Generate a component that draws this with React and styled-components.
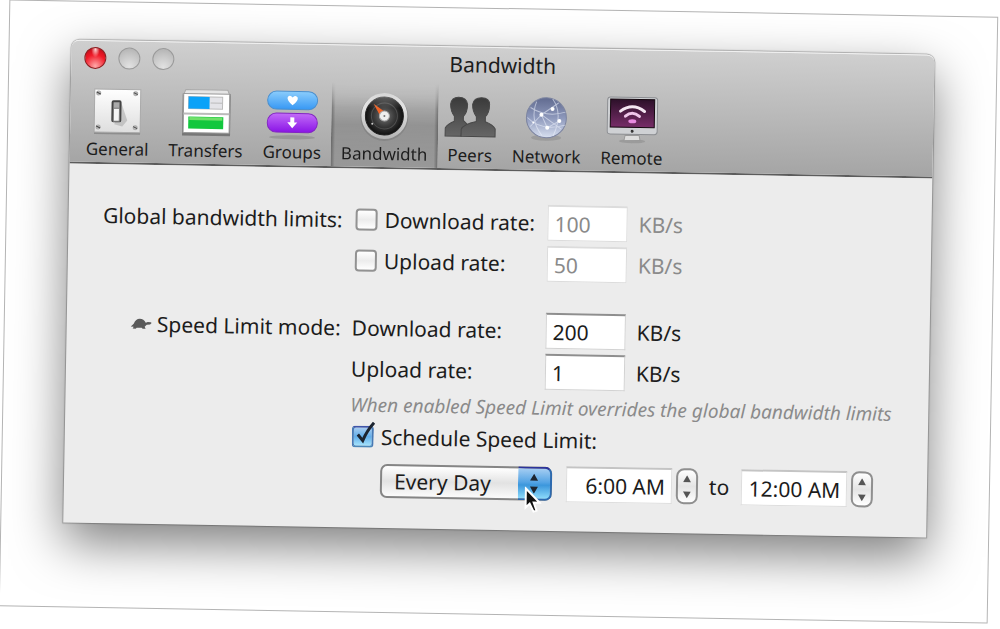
import React from "react";
import styled, { createGlobalStyle, css } from "styled-components";

const TOOLS = [
  { name: "General", icon: GeneralIcon },
  { name: "Transfers", icon: TransfersIcon },
  { name: "Groups", icon: GroupsIcon },
  { name: "Bandwidth", icon: BandwidthIcon, active: true },
  { name: "Peers", icon: PeersIcon },
  { name: "Network", icon: NetworkIcon },
  { name: "Remote", icon: RemoteIcon },
];

const App = () => {
  return (
    <Page>
      <GlobalStyle />
      <Sheet>
        <Window>
          <Header>
            <TitleBar>
              <Lights>
                <Light $red aria-label="Close" />
                <Light aria-label="Minimize" />
                <Light aria-label="Zoom" />
              </Lights>
              <Title>Bandwidth</Title>
            </TitleBar>
            <Toolbar>
              {TOOLS.map(({ name, icon: Icon, active }) => (
                <Tool key={name} $active={active}>
                  <Icon />
                  {name}
                </Tool>
              ))}
            </Toolbar>
          </Header>
          <Body>
            <Section>
              <SectionLabel>Global bandwidth limits:</SectionLabel>
              <Fields>
                <Row>
                  <Check id="limit-down" label="Download rate:" />
                  <RateInput aria-label="Download limit" defaultValue="100" disabled />
                  <Unit $muted>KB/s</Unit>
                </Row>
                <Row>
                  <Check id="limit-up" label="Upload rate:" />
                  <RateInput aria-label="Upload limit" defaultValue="50" disabled />
                  <Unit $muted>KB/s</Unit>
                </Row>
              </Fields>
            </Section>
            <Section>
              <SectionLabel>
                <Turtle />
                Speed Limit mode:
              </SectionLabel>
              <Fields>
                <Row>
                  <label htmlFor="speed-down">Download rate:</label>
                  <RateInput id="speed-down" defaultValue="200" />
                  <Unit>KB/s</Unit>
                </Row>
                <Row>
                  <label htmlFor="speed-up">Upload rate:</label>
                  <RateInput id="speed-up" defaultValue="1" />
                  <Unit>KB/s</Unit>
                </Row>
                <Hint>When enabled Speed Limit overrides the global bandwidth limits</Hint>
                <Check id="schedule" label="Schedule Speed Limit:" defaultChecked />
                <Schedule>
                  <Popup>
                    <Select aria-label="Days" defaultValue="Every Day">
                      <option>Every Day</option>
                      <option>Weekdays</option>
                      <option>Weekends</option>
                    </Select>
                    <PopupCap>
                      <svg width="10" height="20" viewBox="0 0 10 20">
                        <path d="M5 0L9 7H1zM5 20L1 13H9z" fill="#1d2530" />
                      </svg>
                    </PopupCap>
                    <Cursor />
                  </Popup>
                  <TimeInput aria-label="From" defaultValue="6:00 AM" />
                  <Steps />
                  <To>to</To>
                  <TimeInput aria-label="Until" defaultValue="12:00 AM" />
                  <Steps />
                </Schedule>
              </Fields>
            </Section>
          </Body>
        </Window>
      </Sheet>
    </Page>
  );
};

export default App;

function Check({ id, label, ...rest }) {
  return (
    <CheckWrap>
      <CheckBox>
        <CheckInput type="checkbox" id={id} {...rest} />
        <Tick viewBox="0 0 22 26">
          <path d="M5 13L10 19Q14 9 21 1" fill="none" stroke="#1c2430" strokeWidth="3" />
        </Tick>
      </CheckBox>
      <label htmlFor={id}>{label}</label>
    </CheckWrap>
  );
}

function Steps() {
  return (
    <Stepper>
      <StepButton aria-label="Later">
        <svg width="8" height="7" viewBox="0 0 8 7">
          <path d="M4 0L8 7H0z" fill="#555" />
        </svg>
      </StepButton>
      <StepButton aria-label="Earlier">
        <svg width="8" height="7" viewBox="0 0 8 7">
          <path d="M4 7L0 0H8z" fill="#555" />
        </svg>
      </StepButton>
    </Stepper>
  );
}

function GeneralIcon() {
  return (
    <svg width="50" height="50" viewBox="0 0 50 50">
      <defs>
        <linearGradient id="plate" x2="0" y2="1">
          <stop stopColor="#fff" />
          <stop offset="1" stopColor="#dedede" />
        </linearGradient>
      </defs>
      <rect x="2" y="4" width="46" height="43" fill="#777" opacity=".6" />
      <rect x="2" y="2" width="46" height="43" fill="url(#plate)" stroke="#aaa" />
      <g stroke="#777" strokeWidth="1">
        {[[6, 6], [43, 6], [6, 40], [43, 40]].map(([x, y]) => (
          <g key={`${x}-${y}`}>
            <circle cx={x} cy={y} r="2" fill="#bbb" stroke="#aaa" />
            <path d={`M${x - 2} ${y - 1}l4 2`} stroke="#444" />
          </g>
        ))}
      </g>
      <path d="M29 16l6 17-5 6-8-2z" fill="#999" opacity=".45" />
      <rect x="20" y="14" width="8" height="20" rx="1" fill="#aaa" stroke="#444" strokeWidth="2" />
      <rect x="21" y="21" width="6" height="13" fill="#f6f6f6" stroke="#777" />
    </svg>
  );
}

function TransfersIcon() {
  return (
    <svg width="50" height="50" viewBox="0 0 50 50">
      <rect x="1" y="5" width="48" height="42" fill="#777" />
      <path d="M4 1H46L48 6H2z" fill="#e5e5e5" stroke="#aaa" />
      <rect x="2" y="5" width="46" height="39" fill="#fff" stroke="#999" />
      <path d="M2 25H48" stroke="#bbb" strokeWidth="2" />
      <rect x="7" y="8" width="34" height="12" fill="#e4e4e8" stroke="#bbb" />
      <rect x="7" y="8" width="21" height="12" fill="#0aa2f8" />
      <path d="M29 14H41" stroke="#bbb" />
      <rect x="7" y="28" width="35" height="12" fill="#12c73e" />
      <path d="M8 30H41" stroke="#6fe06a" strokeWidth="3" />
    </svg>
  );
}

function GroupsIcon() {
  return (
    <svg width="52" height="50" viewBox="0 0 52 50">
      <defs>
        <linearGradient id="bluePill" x2="0" y2="1">
          <stop stopColor="#8bcdfc" />
          <stop offset="1" stopColor="#3798f4" />
        </linearGradient>
        <linearGradient id="purplePill" x2="0" y2="1">
          <stop stopColor="#c26cf8" />
          <stop offset="1" stopColor="#8a14e6" />
        </linearGradient>
      </defs>
      <ellipse cx="26" cy="47" rx="23" ry="2" fill="#888" opacity=".6" />
      <rect x="1" y="1" width="50" height="18" rx="9" fill="url(#bluePill)" stroke="#4a8fce" />
      <rect x="1" y="23" width="50" height="19" rx="9" fill="url(#purplePill)" stroke="#8226c2" />
      <path d="M26 15Q20 10 21 7Q23 4 26 7Q29 4 31 7Q32 10 26 15z" fill="#fff" />
      <path d="M24 27h4v5h3l-5 6-5-6h3z" fill="#fff" />
    </svg>
  );
}

function BandwidthIcon() {
  return (
    <svg width="50" height="50" viewBox="0 0 50 50">
      <defs>
        <linearGradient id="bezel" x2="0" y2="1">
          <stop stopColor="#f8f8f8" />
          <stop offset="1" stopColor="#b4b4b4" />
        </linearGradient>
        <radialGradient id="dial">
          <stop stopColor="#777" />
          <stop offset="0.5" stopColor="#3e3e3e" />
          <stop offset="1" stopColor="#101010" />
        </radialGradient>
      </defs>
      <circle cx="25" cy="25" r="24" fill="#777" opacity=".5" />
      <circle cx="25" cy="24" r="23" fill="url(#bezel)" />
      <circle cx="25" cy="24" r="19" fill="url(#dial)" stroke="#222" />
      <circle cx="25" cy="24" r="13" fill="none" stroke="#666" opacity=".6" />
      <path d="M14 12L27 21L22 26z" fill="#f06428" />
      <circle cx="25" cy="24" r="5" fill="#eee" stroke="#aaa" />
      <circle cx="25" cy="24" r="1" fill="#777" />
      <circle cx="13" cy="32" r="1" fill="#ccc" />
    </svg>
  );
}

function PeersIcon() {
  return (
    <svg width="52" height="50" viewBox="0 0 52 50">
      <defs>
        <linearGradient id="peer" x2="0" y2="1">
          <stop stopColor="#3a3a3a" />
          <stop offset="1" stopColor="#666" />
        </linearGradient>
      </defs>
      <g fill="url(#peer)" stroke="#484848">
        <path d="M1 43V35Q3 31 10 28V23Q6 18 6 11Q7 4 14 4Q22 4 23 11Q23 19 19 23V27L23 31Q17 34 17 43z" />
        <path d="M17 43V36Q19 31 32 28V23Q28 18 28 11Q29 4 37 4Q45 4 45 11Q45 19 41 23V28Q49 31 51 35V43z" />
      </g>
    </svg>
  );
}

function NetworkIcon() {
  return (
    <svg width="50" height="50" viewBox="0 0 50 50">
      <defs>
        <linearGradient id="globe" x2="0" y2="1">
          <stop stopColor="#616b90" />
          <stop offset="0.5" stopColor="#8d98bb" />
          <stop offset="1" stopColor="#d8e0f0" />
        </linearGradient>
      </defs>
      <ellipse cx="25" cy="43" rx="15" ry="3" fill="#888" opacity=".5" />
      <circle cx="25" cy="23" r="20" fill="url(#globe)" stroke="#7c84a0" />
      <g fill="none" stroke="#e8edf8" opacity=".6">
        <path d="M9 13Q25 23 44 17M6 23Q20 37 44 30M15 7Q8 25 21 41M31 4Q42 19 32 41M20 20L40 34M20 20L37 8M20 20L26 33L38 26M20 20L9 32" />
      </g>
      <g fill="#fff">
        <circle cx="20" cy="20" r="2" />
        <circle cx="31" cy="14" r="2" />
        <circle cx="26" cy="33" r="2" />
        <circle cx="38" cy="26" r="2" />
        <circle cx="12" cy="28" r="1" />
      </g>
    </svg>
  );
}

function RemoteIcon() {
  return (
    <svg width="52" height="50" viewBox="0 0 52 50">
      <defs>
        <linearGradient id="screen" x2="0" y2="1">
          <stop stopColor="#2c1029" />
          <stop offset="1" stopColor="#772d68" />
        </linearGradient>
      </defs>
      <ellipse cx="26" cy="45" rx="13" ry="2" fill="#888" opacity=".5" />
      <path d="M19 39H33L34 44H18z" fill="#ddd" stroke="#999" />
      <rect x="1" y="1" width="50" height="37" rx="3" fill="#cfd1d4" stroke="#8c8e92" />
      <rect x="4" y="3" width="44" height="28" fill="url(#screen)" stroke="#15080f" />
      <circle cx="26" cy="35" r="1" fill="#333" stroke="#333" />
      <g fill="none" strokeWidth="3" strokeLinecap="round">
        <path d="M14 15Q26 6 38 15" stroke="#f4e6f2" />
        <path d="M19 20Q26 14 33 20" stroke="#efc6ea" />
      </g>
      <ellipse cx="26" cy="25" rx="4" ry="2" fill="#e98be0" />
    </svg>
  );
}

function Turtle() {
  return (
    <svg width="21" height="14" viewBox="0 0 21 14">
      <path
        d="M0 10Q2 8 3 7Q5 2 9 2Q13 2 15 6L17 5Q21 5 21 6Q20 8 16 8L14 10L15 12H12L11 11H6L5 12H2L3 10z"
        fill="#5a5a5a"
      />
    </svg>
  );
}

function Cursor() {
  return (
    <Pointer viewBox="0 0 18 28">
      <path
        d="M2 2V21L6 17L10 25L13 24L10 16H16z"
        fill="#111"
        stroke="#fff"
        strokeWidth="2"
      />
    </Pointer>
  );
}

const GlobalStyle = createGlobalStyle`
  * {
    box-sizing: border-box;
  }

  body {
    margin: 0;
    background: #fff;
  }

  button, input, select {
    font: inherit;
    color: inherit;
    margin: 0;
    border-radius: 0;
  }
`;

const Page = styled.div`
  min-height: 100vh;
  padding: 8px 7px 14px 4px;
  overflow: hidden;
  font-family: "Noto Sans", "Open Sans", sans-serif;
  font-size: 21px;
  line-height: 28px;
  color: #1c1c1c;
`;

const Sheet = styled.div`
  padding: 38px 62px 84px;
  border: 1px solid #b4b4b4;
  transform: rotate(1deg);
`;

const Window = styled.main`
  border-radius: 8px 8px 0 0;
  background: #ececec;
  box-shadow: 0 0 1px 1px rgba(0, 0, 0, 0.25), 0 20px 50px rgba(0, 0, 0, 0.5);
`;

const Header = styled.header`
  border-top: 1px solid #f0f0f0;
  border-bottom: 2px solid #5c5c5c;
  border-radius: 8px 8px 0 0;
  background: linear-gradient(#cfcfcf, #a5a5a5);
`;

const TitleBar = styled.div`
  display: grid;
  grid-template-columns: 1fr auto 1fr;
  align-items: center;
  height: 37px;
  padding: 0 13px 4px;
`;

const Lights = styled.div`
  display: flex;
  gap: 12px;
`;

const Light = styled.button`
  width: 22px;
  height: 22px;
  padding: 0;
  border: 1px solid #9a9a9a;
  border-radius: 50%;
  background: radial-gradient(circle at 50% 90%, #e2e2e2, #c4c4c4 60%, #aeaeae);

  ${({ $red }) =>
    $red &&
    css`
      border-color: #8c2022;
      background: radial-gradient(ellipse at 50% 8%, #ffd0d0, transparent 30%),
        radial-gradient(circle at 50% 90%, #ffa8a8, #f01a28 55%, #b00814);
    `}
`;

const Title = styled.h1`
  margin: 0;
  font-size: 21px;
  font-weight: 400;
`;

const Toolbar = styled.nav`
  display: flex;
  padding-left: 6px;
`;

const Tool = styled.button`
  display: flex;
  flex-direction: column;
  align-items: center;
  padding: 9px 10px 2px;
  border: 0;
  background: none;
  font-size: 17px;
  line-height: 23px;

  svg {
    margin: 0 -5px;
  }

  ${({ $active }) =>
    $active &&
    css`
      background: linear-gradient(90deg, rgba(0, 0, 0, 0.3), transparent 4px calc(100% - 4px), rgba(0, 0, 0, 0.3)),
        linear-gradient(transparent, rgba(0, 0, 0, 0.18) 50%, rgba(0, 0, 0, 0.08));
      mask-image: linear-gradient(transparent, #000 30%);
    `}
`;

const Body = styled.div`
  display: flex;
  flex-direction: column;
  gap: 31px;
  padding: 33px 30px 29px;
`;

const Section = styled.section`
  display: grid;
  grid-template-columns: 244px 1fr;
  column-gap: 11px;
`;

const SectionLabel = styled.h2`
  display: flex;
  align-items: center;
  justify-content: flex-end;
  gap: 5px;
  height: 36px;
  margin: 0;
  font-size: 21px;
  font-weight: 400;
  white-space: nowrap;
`;

const Fields = styled.div`
  display: flex;
  flex-direction: column;
  gap: 5px;
`;

const Row = styled.div`
  display: grid;
  grid-template-columns: 194px 80px auto;
  align-items: center;
  height: 36px;
`;

const CheckWrap = styled.div`
  display: flex;
  align-items: center;
  gap: 7px;
  padding-left: 2px;
`;

const CheckBox = styled.span`
  display: flex;
  position: relative;
`;

const CheckInput = styled.input`
  appearance: none;
  width: 22px;
  height: 22px;
  border: 2px solid #929292;
  border-radius: 4px;
  background: linear-gradient(#fff, #ececec 50%, #fff);

  &:checked {
    border-color: #3f55a8 #4779b4 #4c87b8;
    background: linear-gradient(#a9cdf0, #62aeea 50%, #a6e4fc);
  }
`;

const Tick = styled.svg`
  display: none;
  position: absolute;
  left: 1px;
  bottom: 0;
  width: 22px;
  height: 26px;
  pointer-events: none;

  ${CheckInput}:checked + & {
    display: block;
  }
`;

const field = css`
  height: 36px;
  border: 1px solid #d2d2d2;
  border-top: 2px solid #8e8e8e;
  background: #fff;
`;

const RateInput = styled.input`
  ${field}
  width: 80px;
  padding: 0 6px;

  &:disabled {
    border-color: #dcdcdc;
    color: #8a8a8a;
  }
`;

const Unit = styled.span`
  padding-left: 11px;
  color: ${({ $muted }) => ($muted ? "#8a8a8a" : "inherit")};
`;

const Hint = styled.p`
  margin: 0;
  font-size: 19px;
  line-height: 26px;
  font-style: italic;
  color: #8a8a8a;
  white-space: nowrap;
`;

const Schedule = styled.div`
  display: flex;
  align-items: center;
  padding: 7px 0 0 31px;
`;

const Popup = styled.div`
  position: relative;
  margin-right: 14px;
`;

const Select = styled.select`
  appearance: none;
  display: block;
  width: 172px;
  height: 34px;
  padding: 0 40px 0 12px;
  border: 2px solid #858585;
  border-radius: 7px;
  background: linear-gradient(#fff, #e2e2e2 50%, #fbfbfb);
`;

const PopupCap = styled.span`
  position: absolute;
  top: 0;
  right: 0;
  bottom: 0;
  display: flex;
  align-items: center;
  justify-content: center;
  width: 34px;
  border: 2px solid #2c6ab0;
  border-top-color: #2c349c;
  border-left: 0;
  border-radius: 0 7px 7px 0;
  background: linear-gradient(#a4cdf2, #55a4e4 45%, #3c97dc 55%, #8edcfb);
  pointer-events: none;
`;

const Pointer = styled.svg`
  position: absolute;
  top: 20px;
  left: 144px;
  width: 18px;
  height: 28px;
  pointer-events: none;
`;

const TimeInput = styled.input`
  ${field}
  width: 106px;
  padding: 0 6px;
  border-color: #c4c4c4 #dedede #dedede;
  text-align: right;
`;

const Stepper = styled.span`
  display: flex;
  flex-direction: column;
  width: 22px;
  height: 36px;
  margin-left: 4px;
  border: 2px solid #8f8f8f;
  border-radius: 8px;
  background: linear-gradient(#fff, #e4e4e4 50%, #fff);
`;

const StepButton = styled.button`
  display: flex;
  flex: 1;
  align-items: center;
  justify-content: center;
  padding: 0;
  border: 0;
  background: none;
`;

const To = styled.span`
  padding: 0 12px 0 11px;
`;
